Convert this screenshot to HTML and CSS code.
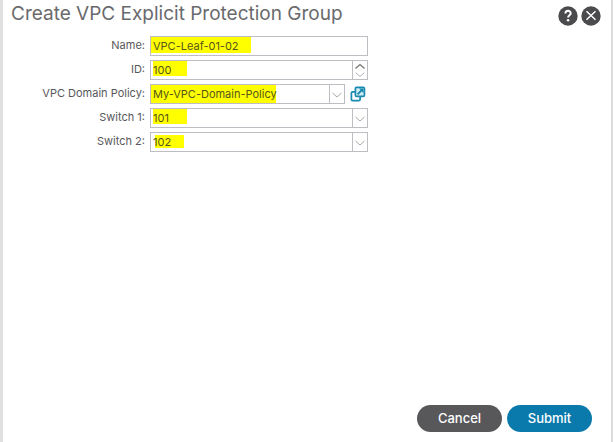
FILE: index.html
```
<!DOCTYPE html>
<html lang="en">
<head>
    <meta charset="utf-8">
    <title>Create VPC Explicit Protection Group</title>
    <link rel="stylesheet" href="styles.css">
</head>
<body>
    <form class="dialog">
        <header class="dialog-header">
            <h1>Create VPC Explicit Protection Group</h1>
            <button type="button" class="icon-btn" aria-label="Help">
                <svg width="20" height="20" viewBox="0 0 20 20">
                    <circle cx="10" cy="10" r="9.7" fill="#4b4b4d"/>
                    <path d="M7.4 7.6C7.4 4 12.7 4 12.7 7.3C12.7 9.3 10.1 9.3 10.1 11.5" fill="none" stroke="#fff" stroke-width="2"/>
                    <circle cx="10.1" cy="14.2" r="1.3" fill="#fff"/>
                </svg>
            </button>
            <button type="button" class="icon-btn" aria-label="Close">
                <svg width="20" height="20" viewBox="0 0 20 20">
                    <circle cx="10" cy="10" r="9.7" fill="#4b4b4d"/>
                    <path d="M5.5 5.2L14.5 13.8M14.5 5.2L5.5 13.8" stroke="#fff" stroke-width="1.5"/>
                </svg>
            </button>
        </header>

        <div class="fields">
            <label for="name">Name:</label>
            <div class="field">
                <input type="text" id="name" class="mark-name" value="VPC-Leaf-01-02">
            </div>

            <label for="group-id">ID:</label>
            <div class="field">
                <input type="number" id="group-id" class="mark-short" value="100">
                <span class="trigger">
                    <svg width="14" height="18" viewBox="0 0 14 18" fill="none">
                        <path d="M2.5 7.5L7 3.5L11.5 7.5" stroke="#777" stroke-width="1.3"/>
                        <path d="M2.5 11.5L7 15.5L11.5 11.5" stroke="#b5b5b5"/>
                    </svg>
                </span>
            </div>

            <label for="policy">VPC Domain Policy:</label>
            <div class="policy-row">
                <div class="field">
                    <select id="policy" class="mark-policy">
                        <option>My-VPC-Domain-Policy</option>
                    </select>
                    <span class="trigger">
                        <svg width="14" height="18" viewBox="0 0 14 18" fill="none">
                            <path d="M2.5 8L7 12L11.5 8" stroke="#aaa"/>
                        </svg>
                    </span>
                </div>
                <button type="button" class="icon-btn" aria-label="Open policy">
                    <svg width="16" height="16" viewBox="0 0 16 16">
                        <rect x="1.4" y="5.9" width="8.7" height="8.7" rx="1.2" fill="#fff" stroke="#1a8ab0" stroke-width="1.7"/>
                        <rect x="5.4" y="1.4" width="9" height="9" rx="1.2" fill="#d3edf5" stroke="#1a8ab0" stroke-width="1.7"/>
                        <path d="M9 2.5H13.4V7L11.8 5.4L8.2 9L6.9 7.7L10.5 4.1Z" fill="#1a8ab0"/>
                    </svg>
                </button>
            </div>

            <label for="switch-1">Switch 1:</label>
            <div class="field">
                <select id="switch-1" class="mark-short">
                    <option>101</option>
                </select>
                <span class="trigger">
                    <svg width="14" height="18" viewBox="0 0 14 18" fill="none">
                        <path d="M2.5 8L7 12L11.5 8" stroke="#aaa"/>
                    </svg>
                </span>
            </div>

            <label for="switch-2">Switch 2:</label>
            <div class="field">
                <select id="switch-2" class="mark-switch">
                    <option>102</option>
                </select>
                <span class="trigger">
                    <svg width="14" height="18" viewBox="0 0 14 18" fill="none">
                        <path d="M2.5 8L7 12L11.5 8" stroke="#aaa"/>
                    </svg>
                </span>
            </div>
        </div>

        <footer class="dialog-footer">
            <button type="button" class="btn cancel-btn">Cancel</button>
            <button type="submit" class="btn submit-btn">Submit</button>
        </footer>
    </form>
</body>
</html>
```
FILE: styles.css
```
* {
    box-sizing: border-box;
}
body {
    margin: 0;
    background-color: #fff;
    font-family: Inter, "Liberation Sans", sans-serif;
    font-size: 11px;
    color: #58585b;
}
.dialog {
    display: flex;
    flex-direction: column;
    min-height: 100vh;
    border-left: 3px solid #e0e0e0;
    border-right: 2px solid #dcdcdc;
}
.dialog-header {
    display: flex;
    align-items: center;
    gap: 3px;
    padding: 2px 10px 0 8px;
}
h1 {
    flex: 1;
    margin: 0;
    font-size: 19px;
    line-height: 24px;
    font-weight: 400;
    color: #6a6a6d;
}
.icon-btn {
    display: flex;
    padding: 0;
    border: none;
    background: none;
    cursor: pointer;
}
.dialog-header .icon-btn {
    padding-top: 4px;
}
.fields {
    display: grid;
    grid-template-columns: 142px minmax(0, 218px);
    gap: 4px 5px;
    padding-top: 10px;
}
label {
    text-align: right;
    line-height: 18px;
}
.field {
    display: flex;
    flex: 1;
    height: 20px;
    border: 1px solid #bdbdc3;
    background-color: #fff;
}
input, select {
    flex: 1;
    min-width: 0;
    height: 18px;
    padding: 0 2px 1px;
    border: none;
    outline: none;
    appearance: none;
    font: inherit;
    color: #55551c;
    background: linear-gradient(#ff0, #ff0) no-repeat 0 0;
}
input[type="number"] {
    appearance: textfield;
}
.mark-name {
    background-size: 100px 16px;
}
.mark-short {
    background-position: 2px 0;
    background-size: 34px 15px;
}
.mark-switch {
    background-position: 4px 2px;
    background-size: 29px 13px;
}
.mark-policy {
    background-size: 125px 18px;
}
.trigger {
    display: flex;
    border-left: 1px solid #bdbdc3;
    pointer-events: none;
}
.policy-row {
    display: flex;
    align-items: center;
    gap: 5px;
    padding-right: 2px;
}
.dialog-footer {
    display: flex;
    justify-content: flex-end;
    gap: 5px;
    margin-top: auto;
    padding: 10px 19px 10px 0;
}
.btn {
    width: 85px;
    height: 27px;
    padding: 0 0 2px;
    border: none;
    border-radius: 14px;
    color: #fff;
    font-family: inherit;
    font-size: 13px;
    font-weight: 500;
    cursor: pointer;
}
.cancel-btn {
    background-color: #58585b;
}
.submit-btn {
    background-color: #0a7aac;
}
```
